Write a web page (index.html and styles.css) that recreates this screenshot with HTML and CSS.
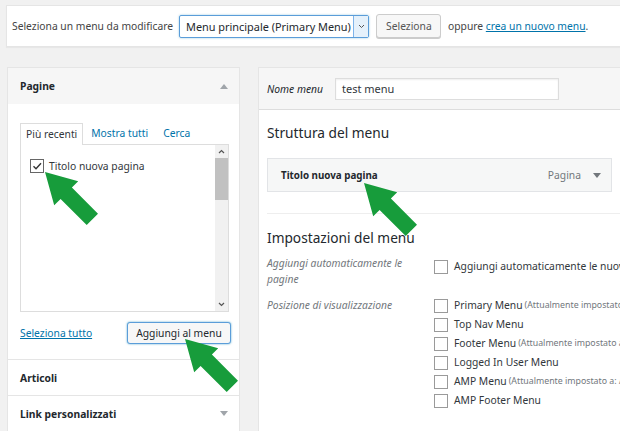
FILE: index.html
```html
<!DOCTYPE html>
<html lang="it">
<head>
  <meta charset="UTF-8">
  <meta name="viewport" content="width=device-width, initial-scale=1.0">
  <title>Menu</title>
  <link rel="stylesheet" href="styles.css">
</head>
<body>

<div class="top-bar">
  <span class="top-label">Seleziona un menu da modificare</span>
  <div class="select">
    <span class="select-text">Menu principale (Primary Menu)</span>
    <span class="select-arrow">
      <svg width="7" height="5" viewBox="0 0 7 5"><path d="M1 1 L3.5 3.5 L6 1" fill="none" stroke="#555" stroke-width="1"/></svg>
    </span>
  </div>
  <button class="btn">Seleziona</button>
  <span class="or">oppure <a href="#">crea un nuovo menu</a>.</span>
</div>

<div class="columns">
  <div class="sidebar">
    <div class="section open">
      <div class="section-title">Pagine <span class="tri up"></span></div>
      <div class="section-body">
        <div class="tabs">
          <span class="tab active">Più recenti</span>
          <a class="tab" href="#">Mostra tutti</a>
          <a class="tab" href="#">Cerca</a>
        </div>
        <div class="tab-panel">
          <div class="list">
            <label class="item">
              <span class="checkbox">
                <svg width="12" height="12" viewBox="0 0 12 12"><path d="M2.5 6.2 L5 8.7 L10 3.2" fill="none" stroke="#333" stroke-width="1.4"/></svg>
              </span>
              Titolo nuova pagina
            </label>
          </div>
          <div class="scrollbar">
            <span class="sb-btn">
              <svg width="7" height="5" viewBox="0 0 7 5"><path d="M1 4 L3.5 1.5 L6 4" fill="none" stroke="#555" stroke-width="1.2"/></svg>
            </span>
            <span class="sb-track"><span class="sb-thumb"></span></span>
            <span class="sb-btn">
              <svg width="7" height="5" viewBox="0 0 7 5"><path d="M1 1 L3.5 3.5 L6 1" fill="none" stroke="#555" stroke-width="1.2"/></svg>
            </span>
          </div>
        </div>
        <div class="actions">
          <a href="#">Seleziona tutto</a>
          <button class="btn focus">Aggiungi al menu</button>
        </div>
      </div>
    </div>
    <div class="section">
      <div class="section-title">Articoli <span class="tri down"></span></div>
    </div>
    <div class="section">
      <div class="section-title">Link personalizzati <span class="tri down"></span></div>
    </div>
  </div>

  <div class="menu-edit">
    <div class="menu-header">
      <span class="name-label">Nome menu</span>
      <span class="name-input">test menu</span>
    </div>
    <div class="menu-body">
      <h3>Struttura del menu</h3>
      <div class="menu-item">
        <span class="item-title">Titolo nuova pagina</span>
        <span class="item-type">Pagina <span class="tri down"></span></span>
      </div>

      <div class="settings">
        <h3>Impostazioni del menu</h3>
        <div class="setting-row">
          <div class="setting-label">Aggiungi automaticamente le<br>pagine</div>
          <div class="setting-field">
            <div class="option"><span class="checkbox"></span>Aggiungi automaticamente le nuove pagine di primo livello a questo menu</div>
          </div>
        </div>
        <div class="setting-row">
          <div class="setting-label">Posizione di visualizzazione</div>
          <div class="setting-field">
            <div class="option"><span class="checkbox"></span>Primary Menu <small>(Attualmente impostato a: Menu principale)</small></div>
            <div class="option"><span class="checkbox"></span>Top Nav Menu</div>
            <div class="option"><span class="checkbox"></span>Footer Menu <small>(Attualmente impostato a: Footer)</small></div>
            <div class="option"><span class="checkbox"></span>Logged In User Menu</div>
            <div class="option"><span class="checkbox"></span>AMP Menu <small>(Attualmente impostato a: AMP)</small></div>
            <div class="option"><span class="checkbox"></span>AMP Footer Menu</div>
          </div>
        </div>
      </div>
    </div>
  </div>
</div>

<!-- frecce di evidenziazione -->
<svg class="arrow arrow-1" width="56" height="56" viewBox="0 0 56 56"><polygon points="1,1 34.2,10.2 27.9,16.6 54,42.7 42.7,54 16.6,27.9 10.2,34.2"/></svg>
<svg class="arrow arrow-2" width="56" height="56" viewBox="0 0 56 56"><polygon points="1,1 34.2,10.2 27.9,16.6 54,42.7 42.7,54 16.6,27.9 10.2,34.2"/></svg>
<svg class="arrow arrow-3" width="56" height="56" viewBox="0 0 56 56"><polygon points="1,1 34.2,10.2 27.9,16.6 54,42.7 42.7,54 16.6,27.9 10.2,34.2"/></svg>

</body>
</html>
```

FILE: styles.css
```css
body {
  margin: 0;
  background-color: #f1f1f1;
  font-family: "Noto Sans", sans-serif;
  font-size: 10.3px;
  color: #444;
  overflow: hidden;
  width: 620px;
  height: 431px;
}

a {
  color: #0073aa;
}

.top-bar {
  margin: 5px 0 0 6px;
  height: 40px;
  padding: 0 5px;
  background-color: #fff;
  border: 1px solid #e5e5e5;
  border-right: none;
  box-shadow: 0 1px 1px rgba(0, 0, 0, 0.04);
  display: flex;
  align-items: center;
  white-space: nowrap;
}

.top-label {
  margin-right: 6px;
}

.select {
  width: 190px;
  height: 23px;
  box-sizing: border-box;
  border: 1px solid #5b9dd9;
  border-radius: 2px;
  box-shadow: 0 0 2px rgba(30, 140, 190, 0.5);
  display: flex;
  align-items: center;
  justify-content: space-between;
  margin-right: 7px;
}

.select-text {
  font-size: 10.9px;
  color: #23282d;
  padding-left: 6px;
}

.select-arrow {
  width: 14px;
  height: 21px;
  background-color: #e5f1fb;
  border-left: 1px solid #7eb4ea;
  display: flex;
  align-items: center;
  justify-content: center;
}

.btn {
  font-family: inherit;
  font-size: 10.3px;
  color: #555;
  background-color: #f7f7f7;
  border: 1px solid #ccc;
  border-radius: 3px;
  box-shadow: 0 1px 0 #ccc;
  height: 23px;
  padding: 0 9px;
  margin: 0;
}

.top-bar .btn {
  width: 65px;
  height: 24px;
  margin-right: 7px;
}

.btn.focus {
  color: #23282d;
  border-color: #5b9dd9;
  box-shadow: 0 0 2px rgba(30, 140, 190, 0.8);
  width: 104px;
  height: 22px;
  padding: 0;
}

.columns {
  display: flex;
  margin-top: 20px;
  padding-left: 7px;
  gap: 18px;
}

.sidebar {
  width: 233px;
  flex-shrink: 0;
  background-color: #fff;
  border: 1px solid #e5e5e5;
  box-sizing: border-box;
}

.section {
  border-bottom: 1px solid #e5e5e5;
}

.section-title {
  height: 35px;
  padding: 0 11px 0 12px;
  display: flex;
  align-items: center;
  justify-content: space-between;
  font-weight: bold;
  font-size: 10.3px;
  color: #23282d;
}

.section.open .section-title {
  height: 36px;
  background-color: #f6f6f6;
}

.tri {
  width: 0;
  height: 0;
  border-left: 4px solid transparent;
  border-right: 4px solid transparent;
}

.tri.up {
  border-bottom: 5px solid #a0a5aa;
}

.tri.down {
  border-top: 5px solid #a0a5aa;
}

.section-body {
  padding: 19px 8px 15px 12px;
}

.tabs {
  display: flex;
  gap: 3px;
  height: 21px;
}

.tab {
  padding: 0 6px;
  line-height: 21px;
  text-decoration: none;
}

.tab.active {
  padding: 0 5px;
  margin-right: -1px;
  border: 1px solid #ddd;
  border-bottom: none;
  line-height: 20px;
  background-color: #fff;
  color: #32373c;
  position: relative;
  z-index: 1;
  margin-bottom: -1px;
}

.tab-panel {
  height: 168px;
  margin-right: 2px;
  border: 1px solid #ddd;
  box-sizing: border-box;
  display: flex;
}

.list {
  flex: 1;
  padding: 14px 9px;
}

.item {
  display: flex;
  align-items: center;
  gap: 5px;
  color: #32373c;
}

.checkbox {
  width: 14px;
  height: 14px;
  box-sizing: border-box;
  border: 1px solid #9a9a9a;
  background-color: #fff;
  display: inline-flex;
  align-items: center;
  justify-content: center;
  flex-shrink: 0;
}

.item .checkbox {
  border-color: #666;
}

.scrollbar {
  width: 13px;
  background-color: #f1f1f1;
  display: flex;
  flex-direction: column;
}

.sb-btn {
  height: 13px;
  display: flex;
  align-items: center;
  justify-content: center;
}

.sb-track {
  flex: 1;
}

.sb-thumb {
  display: block;
  height: 42px;
  background-color: #c1c1c1;
}

.actions {
  margin-top: 10px;
  display: flex;
  justify-content: space-between;
  align-items: center;
}

.menu-edit {
  width: 362px;
  flex-shrink: 0;
  background-color: #fff;
  border: 1px solid #e5e5e5;
  border-right: none;
  white-space: nowrap;
  height: 364px;
  overflow: hidden;
}

.menu-header {
  height: 41px;
  background-color: #f6f6f6;
  border-bottom: 1px solid #ddd;
  display: flex;
  align-items: center;
  padding-left: 8px;
}

.name-label {
  font-style: italic;
  color: #23282d;
  width: 68px;
}

.name-input {
  width: 224px;
  height: 22px;
  box-sizing: border-box;
  border: 1px solid #ddd;
  background-color: #fff;
  font-size: 11px;
  color: #32373c;
  padding-left: 6px;
  line-height: 20px;
  box-shadow: inset 0 1px 2px rgba(0, 0, 0, 0.07);
}

.menu-body {
  padding: 0 0 0 8px;
}

h3 {
  margin: 0;
  font-size: 13.7px;
  font-weight: normal;
  color: #23282d;
  line-height: 20px;
}

.menu-body > h3 {
  margin-top: 13px;
}

.menu-item {
  margin-top: 15px;
  width: 345px;
  height: 34px;
  box-sizing: border-box;
  background-color: #f6f7f7;
  border: 1px solid #e2e4e7;
  display: flex;
  align-items: center;
  justify-content: space-between;
  padding: 0 10px 0 13px;
}

.item-title {
  font-weight: bold;
  font-size: 9.8px;
  color: #23282d;
}

.item-type {
  color: #72777c;
  display: flex;
  align-items: center;
  gap: 12px;
}

.item-type .tri.down {
  border-top-color: #72777c;
}

.settings {
  margin-top: 21px;
  border-top: 1px solid #eee;
  padding-top: 14px;
}

.settings h3 {
  margin-bottom: 7px;
}

.setting-row {
  display: flex;
}

.setting-row + .setting-row {
  margin-top: 9px;
}

.setting-label {
  width: 167px;
  flex-shrink: 0;
  font-style: italic;
  color: #72777c;
  line-height: 16px;
}

.setting-row + .setting-row .setting-label {
  line-height: 19px;
}

.setting-row:first-of-type .setting-field {
  padding-top: 2px;
}

.option {
  display: flex;
  align-items: center;
  gap: 6px;
  line-height: 19px;
  color: #32373c;
}

.option small {
  font-size: 8.8px;
  color: #72777c;
  margin-left: -4px;
}

.arrow {
  position: absolute;
  fill: #179c3b;
}

.arrow-1 {
  left: 44px;
  top: 171px;
}

.arrow-2 {
  left: 363px;
  top: 182px;
}

.arrow-3 {
  left: 184px;
  top: 338px;
}
```
